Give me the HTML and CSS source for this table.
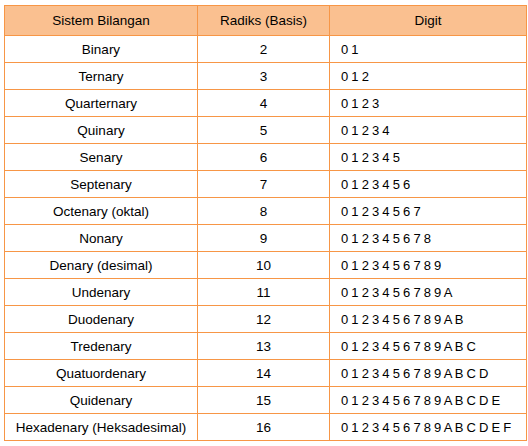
FILE: index.html
```html
<!DOCTYPE html>
<html>
<head>
<meta charset="utf-8">
<link rel="stylesheet" href="styles.css">
</head>
<body>
<table class="radix">
  <colgroup>
    <col class="c-name">
    <col class="c-radix">
    <col class="c-digit">
  </colgroup>
  <thead>
    <tr class="head"><th>Sistem Bilangan</th><th>Radiks (Basis)</th><th>Digit</th></tr>
  </thead>
  <tbody>
    <tr><td class="name">Binary</td><td class="num">2</td><td class="dig">0 1</td></tr>
    <tr><td class="name">Ternary</td><td class="num">3</td><td class="dig">0 1 2</td></tr>
    <tr><td class="name">Quarternary</td><td class="num">4</td><td class="dig">0 1 2 3</td></tr>
    <tr><td class="name">Quinary</td><td class="num">5</td><td class="dig">0 1 2 3 4</td></tr>
    <tr><td class="name">Senary</td><td class="num">6</td><td class="dig">0 1 2 3 4 5</td></tr>
    <tr><td class="name">Septenary</td><td class="num">7</td><td class="dig">0 1 2 3 4 5 6</td></tr>
    <tr><td class="name">Octenary (oktal)</td><td class="num">8</td><td class="dig">0 1 2 3 4 5 6 7</td></tr>
    <tr><td class="name">Nonary</td><td class="num">9</td><td class="dig">0 1 2 3 4 5 6 7 8</td></tr>
    <tr><td class="name">Denary (desimal)</td><td class="num">10</td><td class="dig">0 1 2 3 4 5 6 7 8 9</td></tr>
    <tr><td class="name">Undenary</td><td class="num">11</td><td class="dig">0 1 2 3 4 5 6 7 8 9 A</td></tr>
    <tr><td class="name">Duodenary</td><td class="num">12</td><td class="dig">0 1 2 3 4 5 6 7 8 9 A B</td></tr>
    <tr><td class="name">Tredenary</td><td class="num">13</td><td class="dig">0 1 2 3 4 5 6 7 8 9 A B C</td></tr>
    <tr><td class="name">Quatuordenary</td><td class="num">14</td><td class="dig">0 1 2 3 4 5 6 7 8 9 A B C D</td></tr>
    <tr><td class="name">Quidenary</td><td class="num">15</td><td class="dig">0 1 2 3 4 5 6 7 8 9 A B C D E</td></tr>
    <tr><td class="name">Hexadenary (Heksadesimal)</td><td class="num">16</td><td class="dig">0 1 2 3 4 5 6 7 8 9 A B C D E F</td></tr>
  </tbody>
</table>
</body>
</html>
```
FILE: styles.css
```css
html, body {
  background: #ffffff;
}
body {
  margin: 5px 0 0 4px;
  font-family: "Liberation Sans", Arial, sans-serif;
  font-size: 13.5px;
  color: #000000;
}
.radix {
  border-collapse: collapse;
  table-layout: fixed;
  width: 522px;
}
.c-name { width: 193px; }
.c-radix { width: 132px; }
.c-digit { width: 197px; }
.radix th,
.radix td {
  border: 1px solid #f79646;
  padding: 0;
  white-space: nowrap;
}
.radix th {
  background: #fac090;
  font-weight: normal;
  text-align: center;
  height: 29px;
}
.radix td {
  height: 26px;
}
.name,
.num {
  text-align: center;
}
.radix td.dig {
  text-align: left;
  padding-left: 11px;
  font-size: 13px;
  word-spacing: -0.5px;
}
```
